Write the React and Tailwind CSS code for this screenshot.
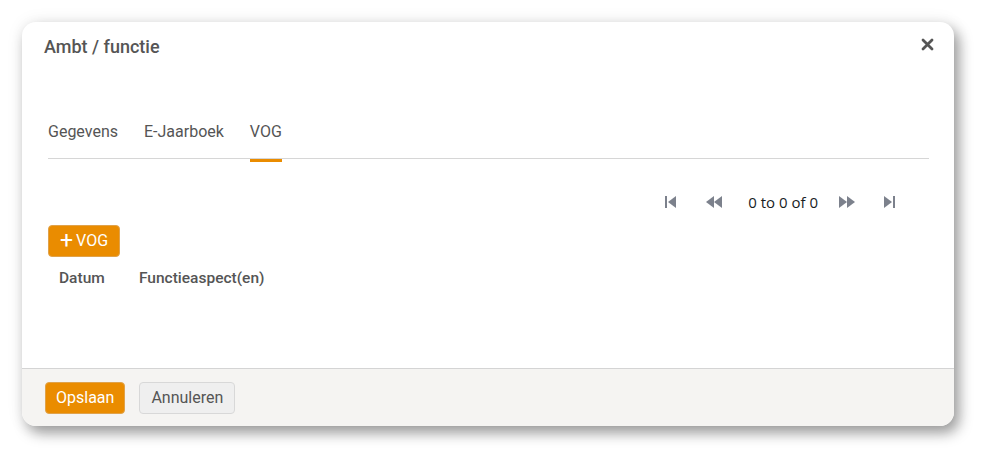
const font = { fontFamily: 'Roboto, "Liberation Sans", sans-serif' };

const PagerIcon = ({ type }) => {
    // little grey triangle icons like ag-grid's pager
    const fill = '#7c818c';
    if (type === 'first')
        return (
            <svg width="12" height="14" viewBox="0 0 12 14">
                <rect x="0" y="1" width="2" height="12" fill={fill} />
                <polygon points="11,1 3,7 11,13" fill={fill} />
            </svg>
        );
    if (type === 'last')
        return (
            <svg width="12" height="14" viewBox="0 0 12 14">
                <polygon points="1,1 9,7 1,13" fill={fill} />
                <rect x="10" y="1" width="2" height="12" fill={fill} />
            </svg>
        );
    if (type === 'prev')
        return (
            <svg width="18" height="14" viewBox="0 0 18 14">
                <polygon points="9,1 1,7 9,13" fill={fill} />
                <polygon points="17,1 9,7 17,13" fill={fill} />
            </svg>
        );
    return (
        <svg width="18" height="14" viewBox="0 0 18 14">
            <polygon points="1,1 9,7 1,13" fill={fill} />
            <polygon points="9,1 17,7 9,13" fill={fill} />
        </svg>
    );
};

const tabs = ['Gegevens', 'E-Jaarboek', 'VOG'];

export default function App() {
    return (
        <div className="min-h-screen bg-white pt-[22px] pl-[22px]" style={font}>
            <div className="w-[932px] h-[404px] flex flex-col bg-white rounded-[14px] overflow-hidden shadow-[5px_7px_14px_rgba(0,0,0,0.38),0_0_18px_rgba(0,0,0,0.07)]">
                {/* header */}
                <div className="flex items-start justify-between pl-[22px] pr-[20px] pt-[13px]">
                    <h2 className="text-[18px] leading-6 font-medium text-[#555]">Ambt / functie</h2>
                    <button className="mt-[3px] text-[#555]">
                        <svg width="13" height="13" viewBox="0 0 13 13">
                            <path d="M2 2 L11 11 M11 2 L2 11" stroke="#555" strokeWidth="2.8" strokeLinecap="round" />
                        </svg>
                    </button>
                </div>

                {/* body */}
                <div className="flex-1 pl-[26px] pr-[25px] pt-[63px]">
                    <div className="flex border-b border-[#d6d6d6]">
                        {tabs.map((t) => (
                            <div key={t} className="relative mr-[26px] pb-[16px] text-[16px] leading-5 text-[#555]">
                                {t}
                                {t === 'VOG' && (
                                    <span className="absolute left-0 right-0 -bottom-[4px] h-[3px] bg-[#ea8c00]" />
                                )}
                            </div>
                        ))}
                    </div>

                    <div className="flex items-center justify-end pr-[34px] mt-[33px] h-[20px]">
                        <span className="mr-[28px] flex"><PagerIcon type="first" /></span>
                        <span className="mr-[25px] flex"><PagerIcon type="prev" /></span>
                        <span className="text-[15px] text-[#181d1f]" style={{ fontFamily: '"Open Sans", "Liberation Sans", sans-serif' }}>0 to 0 of 0</span>
                        <span className="ml-[20px] flex"><PagerIcon type="next" /></span>
                        <span className="ml-[27px] flex"><PagerIcon type="last" /></span>
                    </div>

                    <button className="mt-[13px] flex items-center gap-[3px] h-[32px] px-[11px] bg-[#ea8c00] border border-[#e0a24a] rounded-[4px] text-white text-[16px]">
                        <span className="text-[23px] leading-none -mt-[2px] font-normal">+</span>
                        <span>VOG</span>
                    </button>

                    <div className="flex mt-[10px] text-[15.5px] font-medium text-[#555]">
                        <span className="pl-[11px] w-[91px]">Datum</span>
                        <span>Functieaspect(en)</span>
                    </div>
                </div>

                {/* footer */}
                <div className="h-[58px] flex items-center gap-[14px] pl-[23px] bg-[#f5f4f2] border-t border-[#d4d4d4]">
                    <button className="h-[32px] px-[10px] rounded-[4px] bg-[#ea8c00] border border-[#e0a24a] text-white text-[16px]">Opslaan</button>
                    <button className="h-[32px] px-[11px] rounded-[4px] bg-[#efefef] border border-[#d8d8d8] text-[#555] text-[16px]">Annuleren</button>
                </div>
            </div>
        </div>
    );
}
